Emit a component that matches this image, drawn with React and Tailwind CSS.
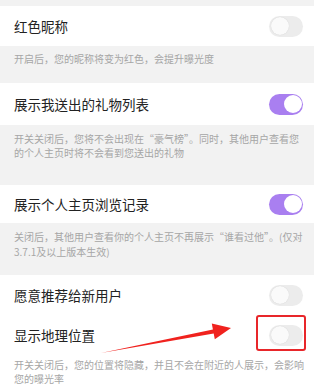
const font = { fontFamily: '"Noto Sans CJK SC", "Noto Sans", sans-serif' };

const Toggle = ({ on }) =>
  on ? (
    <div className="w-[34px] h-[21px] rounded-full bg-[#a97ff0] flex items-center justify-end pr-[1.5px]">
      <div className="w-[18px] h-[18px] rounded-full bg-white" />
    </div>
  ) : (
    <div className="w-[34px] h-[21px] rounded-full bg-[#ececec] flex items-center pl-[1.5px]">
      <div className="w-[18px] h-[18px] rounded-full bg-[#fafafa] shadow-[0_0_1px_rgba(0,0,0,0.15)]" />
    </div>
  );

const Row = ({ title, on, h }) => (
  <div className={`flex items-center justify-between bg-white pl-[14px] pr-[11px] ${h}`}>
    <span className="text-[13.5px] text-[#222]">{title}</span>
    <Toggle on={on} />
  </div>
);

const Desc = ({ lines, className }) => (
  <div className={`px-[14px] text-[10px] leading-[14.5px] text-[#a6a6a6] whitespace-nowrap ${className}`}>
    {lines.map((l) => (
      <div key={l}>{l}</div>
    ))}
  </div>
);

export default function App() {
  return (
    <div className="relative w-[320px] h-[387px] bg-white flex overflow-hidden" style={font}>
      <div className="w-[314px] flex flex-col bg-[#f2f2f2]">
        <div className="h-[6px]" />
        <Row title="红色昵称" on={false} h="h-[40px]" />
        <Desc className="h-[37px] pt-[6px]" lines={["开启后，您的昵称将变为红色，会提升曝光度"]} />
        <Row title="展示我送出的礼物列表" on h="h-[42px]" />
        <Desc
          className="h-[60px] pt-[6.5px]"
          lines={["开关关闭后，您将不会出现在“豪气榜”。同时，其他用户查看您", "的个人主页时将不会看到您送出的礼物"]}
        />
        <Row title="展示个人主页浏览记录" on h="h-[38px]" />
        <Desc
          className="h-[52px] pt-[7px]"
          lines={["关闭后，其他用户查看你的个人主页不再展示“谁看过他”。(仅对", "3.7.1及以上版本生效)"]}
        />
        <div className="flex-1 bg-white">
          <Row title="愿意推荐给新用户" on={false} h="h-[40px]" />
          <Row title="显示地理位置" on={false} h="h-[40px]" />
          <Desc
            className="pt-[2.5px]"
            lines={["开关关闭后，您的位置将隐藏，并且不会在附近的人展示，会影响", "您的曝光率"]}
          />
        </div>
      </div>

      <div className="absolute left-[256px] top-[315px] w-[50px] h-[36px] border-[2.5px] border-[#e8262a] rounded-[3px]" />
      <svg className="absolute left-0 top-0" width="320" height="387" viewBox="0 0 320 387">
        <polygon
          points="101,353 212.9,329.4 211.8,323.5 231,328 214.8,339.3 213.7,333.4"
          fill="#f0221e"
        />
      </svg>
    </div>
  );
}
